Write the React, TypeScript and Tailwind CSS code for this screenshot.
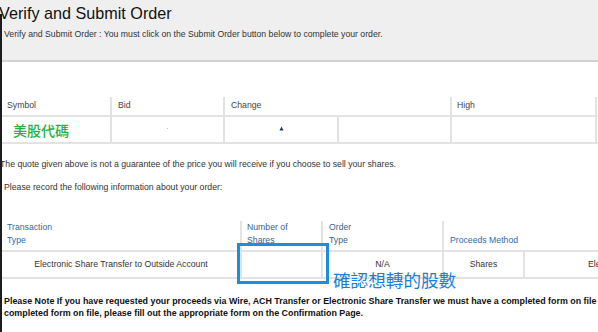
import React from "react";

const line = "border-[#e3e3e3]";

export default function App() {
  return (
    <div className="relative w-[598px] h-[332px] overflow-hidden bg-white text-[#333] font-['Liberation_Sans',Arial,'Noto_Sans_CJK_TC',sans-serif]">
      {/* header band */}
      <div className="h-[62px] bg-[#efefef] border-b-2 border-[#d3d3d3]">
        <h1 className="ml-[-1px] pt-[4px] text-[16.2px] leading-[18px] text-[#111] whitespace-nowrap">
          Verify and Submit Order
        </h1>
        <p className="mt-[7px] ml-[4px] text-[8.7px] leading-[11px] text-[#333] whitespace-nowrap">
          Verify and Submit Order : You must click on the Submit Order button below to complete your order.
        </p>
      </div>

      {/* quote table */}
      <div className="mt-[35px] ml-[2px] text-[8.7px] text-[#444]">
        <div className={`flex h-[20px] border-b-2 ${line}`}>
          <div className={`w-[110px] border-r-2 ${line} pl-[5px] flex items-center`}>Symbol</div>
          <div className={`w-[113px] border-r-2 ${line} pl-[6px] flex items-center`}>Bid</div>
          <div className={`w-[227px] border-r-2 ${line} pl-[6px] flex items-center`}>Change</div>
          <div className={`w-[145px] border-r-2 ${line} pl-[5px] flex items-center`}>High</div>
        </div>
        <div className={`flex h-[27px] border-b-2 ${line}`}>
          <div className={`w-[110px] border-r-2 ${line} pl-[11px] flex items-center`}>
            <span className="text-[14px] leading-[16px] font-medium text-[#27b041] font-['Noto_Sans_CJK_TC',sans-serif]">
              美股代碼
            </span>
          </div>
          <div className={`w-[113px] border-r-2 ${line} flex items-center justify-center`}>
            <span className="w-[1px] h-[1px] bg-[#e6b9a4] mt-[-3px]" />
          </div>
          <div className={`w-[114px] border-r-2 ${line} flex items-center justify-end pr-[53px]`}>
            <svg width="5" height="5" viewBox="0 0 5 5" className="mt-[-2px]">
              <path d="M2.5 0.5 L4.5 4.5 L0.5 4.5 Z" fill="#1f3552" />
            </svg>
          </div>
          <div className={`w-[113px] border-r-2 ${line}`} />
          <div className={`w-[145px] border-r-2 ${line}`} />
        </div>
      </div>

      <p className="mt-[15px] text-[8.7px] leading-[11px] whitespace-nowrap">
        The quote given above is not a guarantee of the price you will receive if you choose to sell your shares.
      </p>
      <p className="mt-[12px] ml-[4px] text-[8.7px] leading-[11px] whitespace-nowrap">
        Please record the following information about your order:
      </p>

      {/* order table */}
      <div className="mt-[28px] ml-[2px] text-[8.7px] w-[700px]">
        <div className={`flex h-[31px] border-b-2 ${line}`}>
          <div className={`w-[240px] border-r-2 ${line} pl-[5px] pb-[3px] flex items-end leading-[13px] text-[#2e6daf]`}>
            Transaction
            <br />
            Type
          </div>
          <div className={`w-[81px] border-r-2 ${line} pl-[5px] pb-[3px] flex items-end leading-[13px] text-[#3b5f86]`}>
            Number of
            <br />
            Shares
          </div>
          <div className={`w-[121px] border-r-2 ${line} pl-[6px] pb-[3px] flex items-end leading-[13px] text-[#3b5f86]`}>
            Order
            <br />
            Type
          </div>
          <div className="flex-1 pl-[6px] pb-[3px] flex items-end leading-[13px] text-[#2e6daf]">
            Proceeds Method
          </div>
        </div>
        <div className={`flex h-[27px] border-b-2 ${line} whitespace-nowrap`}>
          <div className={`w-[240px] border-r-2 ${line} flex items-center justify-center`}>
            Electronic Share Transfer to Outside Account
          </div>
          <div className={`w-[81px] border-r-2 ${line}`} />
          <div className={`w-[121px] border-r-2 ${line} flex items-center justify-center`}>N/A</div>
          <div className={`w-[81px] border-r-2 ${line} flex items-center justify-center`}>Shares</div>
          <div className="w-[128px] pl-[63px] flex items-center">Electronic Share Transfer to Outside Account</div>
        </div>
      </div>

      <p className="mt-[16px] ml-[4px] text-[8.9px] leading-[12px] font-bold text-[#111] whitespace-nowrap">
        Please Note If you have requested your proceeds via Wire, ACH Transfer or Electronic Share Transfer we must have a completed form on file to process your request. If you do not have a
        <br />
        completed form on file, please fill out the appropriate form on the Confirmation Page.
      </p>

      {/* annotation overlay */}
      <div className="absolute left-[237px] top-[243px] w-[92px] h-[41px] border-[3px] border-[#1b8ee0]" />
      <div className="absolute left-[333px] top-[270px] text-[17.6px] leading-[20px] text-[#1a80d6] font-['Noto_Sans_CJK_TC',sans-serif] whitespace-nowrap">
        確認想轉的股數
      </div>

      {/* window edge */}
      <div className="absolute left-0 top-[14px] bottom-0 w-[2px] bg-[#1c1c1c]" />
    </div>
  );
}
